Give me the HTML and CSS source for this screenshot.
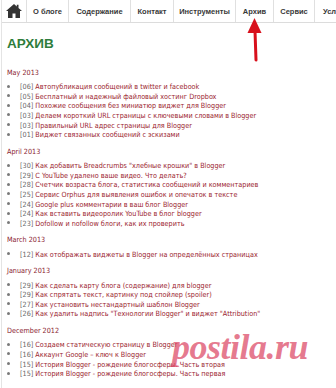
FILE: index.html
```html
<!DOCTYPE html>
<html>
<head>
<meta charset="utf-8">
<link rel="stylesheet" href="styles.css">
</head>
<body>
<div class="page">
  <nav class="nav">
    <div class="nav-home">
      <svg width="16" height="14" viewBox="0 0 16 14"><path d="M8 0 L0 7 L2 7 L2 14 L6.5 14 L6.5 9.5 L9.5 9.5 L9.5 14 L14 14 L14 7 L16 7 L12.5 3.9 L12.5 0.8 L10.8 0.8 L10.8 2.4 Z" fill="#333"/></svg>
    </div>
    <div class="nav-item w42">О блоге</div>
    <div class="nav-item w62">Содержание</div>
    <div class="nav-item w43">Контакт</div>
    <div class="nav-item w62">Инструменты</div>
    <div class="nav-item w38">Архив</div>
    <div class="nav-item w41">Сервис</div>
    <div class="nav-item last">Условия</div>
  </nav>
  <main class="content">
    <h1 class="title">АРХИВ</h1>

    <div class="month">May 2013</div>
    <ul class="posts">
      <li><span class="d">[06]</span> <a>Автопубликация сообщений в twitter и facebook</a></li>
      <li><span class="d">[05]</span> <a>Бесплатный и надежный файловый хостинг Dropbox</a></li>
      <li><span class="d">[04]</span> <a>Похожие сообщения без миниатюр виджет для Blogger</a></li>
      <li><span class="d">[03]</span> <a>Делаем короткий URL страницы с ключевыми словами в Blogger</a></li>
      <li><span class="d">[03]</span> <a>Правильный URL адрес страницы для Blogger</a></li>
      <li><span class="d">[01]</span> <a>Виджет связанных сообщений с эскизами</a></li>
    </ul>

    <div class="month">April 2013</div>
    <ul class="posts">
      <li><span class="d">[30]</span> <a>Как добавить Breadcrumbs "хлебные крошки" в Blogger</a></li>
      <li><span class="d">[29]</span> <a>С YouTube удалено ваше видео. Что делать?</a></li>
      <li><span class="d">[28]</span> <a>Счетчик возраста блога, статистика сообщений и комментариев</a></li>
      <li><span class="d">[25]</span> <a>Сервис Orphus для выявления ошибок и опечаток в тексте</a></li>
      <li><span class="d">[24]</span> <a>Google plus комментарии в ваш блог Blogger</a></li>
      <li><span class="d">[24]</span> <a>Как вставить видеоролик YouTube в блог blogger</a></li>
      <li><span class="d">[23]</span> <a>Dofollow и nofollow блоги, как их проверить</a></li>
    </ul>

    <div class="month">March 2013</div>
    <ul class="posts">
      <li><span class="d">[12]</span> <a>Как отображать виджеты в Blogger на определённых страницах</a></li>
    </ul>

    <div class="month">January 2013</div>
    <ul class="posts">
      <li><span class="d">[29]</span> <a>Как сделать карту блога (содержание) для blogger</a></li>
      <li><span class="d">[29]</span> <a>Как спрятать текст, картинку под спойлер (spoiler)</a></li>
      <li><span class="d">[27]</span> <a>Как установить нестандартный шаблон Blogger</a></li>
      <li><span class="d">[26]</span> <a>Как удалить надпись "Технологии Blogger" и виджет "Attribution"</a></li>
    </ul>

    <div class="month">December 2012</div>
    <ul class="posts">
      <li><span class="d">[16]</span> <a>Создаем статическую страницу в Blogger</a></li>
      <li><span class="d">[16]</span> <a>Аккаунт Google – ключ к Blogger</a></li>
      <li><span class="d">[15]</span> <a>История Blogger - рождение блогосферы. Часть вторая</a></li>
      <li><span class="d">[15]</span> <a>История Blogger - рождение блогосферы. Часть первая</a></li>
    </ul>
  </main>

  <svg class="arrow" width="16" height="44" viewBox="0 0 16 44">
    <path d="M8 13 L9 42" stroke="#d8101c" stroke-width="3" stroke-linecap="round" fill="none"/>
    <path d="M7.5 0 L14.5 15 L0.5 15 Z" fill="#d8101c"/>
  </svg>
  <div class="watermark">postila.ru</div>
</div>
</body>
</html>
```

FILE: styles.css
```css
html, body {
  margin: 0;
  padding: 0;
  background: #fff;
}
body {
  width: 336px;
  height: 388px;
  overflow: hidden;
  font-family: "DejaVu Sans Condensed", "Liberation Sans", sans-serif;
}
.page {
  position: relative;
  height: 388px;
  overflow: hidden;
  border-left: 1px solid #e4e4e4;
  margin-left: 1px;
}
.nav {
  display: flex;
  height: 22px;
  border-bottom: 1px solid #dcdcdc;
  background: #fff;
}
.nav-home {
  flex: none;
  width: 24px;
  display: flex;
  align-items: center;
  justify-content: center;
  border-right: 1px solid #e0e0e0;
}
.nav-item {
  flex: none;
  display: flex;
  align-items: center;
  justify-content: center;
  font-family: "Liberation Sans", Arial, sans-serif;
  font-size: 7.5px;
  font-weight: bold;
  color: #383838;
  border-right: 1px solid #e0e0e0;
  white-space: nowrap;
}
.w42 { width: 41px; }
.w62 { width: 61px; }
.w43 { width: 42px; }
.w38 { width: 37px; }
.w41 { width: 40px; }
.nav-item.last {
  border-right: none;
  padding-left: 8px;
}
.content {
  padding: 12px 0 0 5px;
}
.title {
  margin: 0 0 15px;
  font-family: "Liberation Sans", Arial, sans-serif;
  font-size: 13.5px;
  font-weight: bold;
  color: #2e7d3c;
  line-height: 18px;
}
.month {
  font-size: 7.2px;
  color: #8a2330;
  line-height: 10px;
  margin-bottom: 4.2px;
}
.posts {
  margin: 0 0 7.2px;
  padding: 0;
  list-style: none;
}
.posts li {
  font-size: 7.2px;
  line-height: 9.6px;
  color: #777;
  white-space: nowrap;
}
.posts li::before {
  content: "";
  display: inline-block;
  width: 3px;
  height: 3px;
  border-radius: 50%;
  background: #7a7a7a;
  margin: 0 10px 0 0;
  vertical-align: 1.5px;
}
.d {
  color: #6a6a6a;
}
.posts a {
  color: #9b1c2e;
}
.arrow {
  position: absolute;
  left: 245px;
  top: 18px;
}
.watermark {
  position: absolute;
  left: 170px;
  top: 325px;
  font-family: "Liberation Serif", serif;
  font-style: italic;
  font-weight: bold;
  font-size: 36px;
  line-height: 44px;
  color: rgba(220, 70, 100, 0.72);
  letter-spacing: -0.5px;
}
```
